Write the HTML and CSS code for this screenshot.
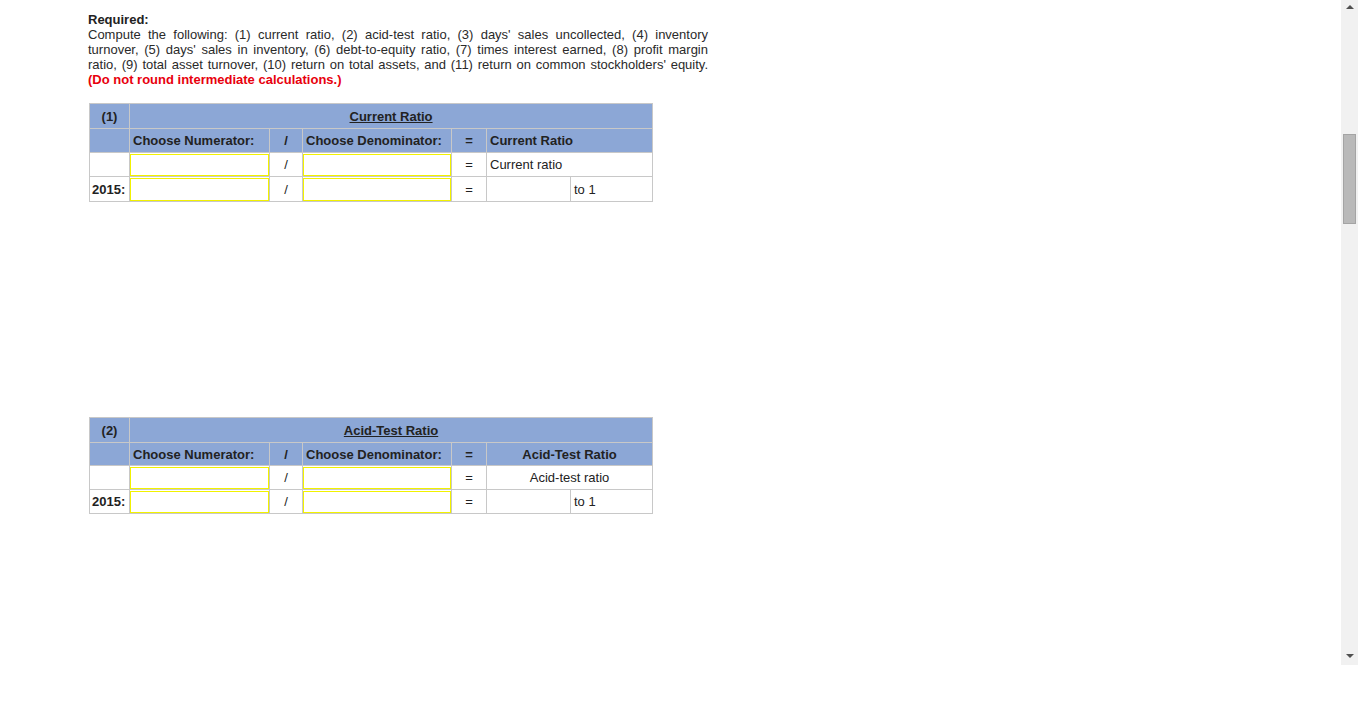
FILE: index.html
```html
<!DOCTYPE html>
<html>
<head>
<meta charset="utf-8">
<link rel="stylesheet" href="styles.css">
</head>
<body>
<div class="frame">
  <div class="content">
    <div class="req-title">Required:</div>
    <div class="req-text">Compute the following: (1) current ratio, (2) acid-test ratio, (3) days' sales uncollected, (4) inventory turnover, (5) days' sales in inventory, (6) debt-to-equity ratio, (7) times interest earned, (8) profit margin ratio, (9) total asset turnover, (10) return on total assets, and (11) return on common stockholders' equity.</div>
    <div class="req-note">(Do not round intermediate calculations.)</div>

    <table class="ratio t1">
      <colgroup>
        <col class="c-lab"><col class="c-num"><col class="c-sl"><col class="c-den"><col class="c-eq"><col class="c-res"><col class="c-to">
      </colgroup>
      <tr class="hd r1">
        <td class="ctr b">(1)</td>
        <td colspan="6" class="ctr b"><span class="ul">Current Ratio</span></td>
      </tr>
      <tr class="hd r2">
        <td></td>
        <td class="b pl">Choose Numerator:</td>
        <td class="ctr b">/</td>
        <td class="b pl">Choose Denominator:</td>
        <td class="ctr b">=</td>
        <td colspan="2" class="b pl">Current Ratio</td>
      </tr>
      <tr class="r3">
        <td></td>
        <td class="in"><div class="box"></div></td>
        <td class="ctr">/</td>
        <td class="in"><div class="box"></div></td>
        <td class="ctr">=</td>
        <td colspan="2" class="pl">Current ratio</td>
      </tr>
      <tr class="r4">
        <td class="b pl2">2015:</td>
        <td class="in"><div class="box"></div></td>
        <td class="ctr">/</td>
        <td class="in"><div class="box"></div></td>
        <td class="ctr">=</td>
        <td></td>
        <td class="pl">to 1</td>
      </tr>
    </table>

    <table class="ratio t2">
      <colgroup>
        <col class="c-lab"><col class="c-num"><col class="c-sl"><col class="c-den"><col class="c-eq"><col class="c-res"><col class="c-to">
      </colgroup>
      <tr class="hd r1">
        <td class="ctr b">(2)</td>
        <td colspan="6" class="ctr b"><span class="ul">Acid-Test Ratio</span></td>
      </tr>
      <tr class="hd r2">
        <td></td>
        <td class="b pl">Choose Numerator:</td>
        <td class="ctr b">/</td>
        <td class="b pl">Choose Denominator:</td>
        <td class="ctr b">=</td>
        <td colspan="2" class="ctr b">Acid-Test Ratio</td>
      </tr>
      <tr class="r3">
        <td></td>
        <td class="in"><div class="box"></div></td>
        <td class="ctr">/</td>
        <td class="in"><div class="box"></div></td>
        <td class="ctr">=</td>
        <td colspan="2" class="ctr">Acid-test ratio</td>
      </tr>
      <tr class="r4">
        <td class="b pl2">2015:</td>
        <td class="in"><div class="box"></div></td>
        <td class="ctr">/</td>
        <td class="in"><div class="box"></div></td>
        <td class="ctr">=</td>
        <td></td>
        <td class="pl">to 1</td>
      </tr>
    </table>
  </div>
  <div class="scrollbar">
    <div class="arrow up"></div>
    <div class="track"><div class="thumb"></div></div>
    <div class="arrow down"></div>
  </div>
</div>
</body>
</html>
```
FILE: styles.css
```css
html, body {
  margin: 0;
  padding: 0;
  background: #fff;
}
body {
  font-family: "Liberation Sans", Arial, sans-serif;
  font-size: 13px;
  color: #222;
}
.frame {
  display: flex;
  width: 1358px;
  height: 665px;
  overflow: hidden;
}
.content {
  width: 1341px;
  flex: none;
  padding: 12px 0 0 88px;
  box-sizing: border-box;
}
.req-title {
  font-weight: bold;
  line-height: 15px;
  width: 620px;
}
.req-text {
  width: 620px;
  line-height: 15px;
  text-align: justify;
  text-align-last: justify;
  color: #2a2a2a;
}
.req-note {
  color: #e8000d;
  font-weight: bold;
  line-height: 15px;
}
table.ratio {
  border-collapse: collapse;
  table-layout: fixed;
  width: 564px;
  margin-left: 1px;
}
table.t1 { margin-top: 16px; }
table.t2 { margin-top: 215px; }
.c-lab { width: 40px; }
.c-num { width: 140px; }
.c-sl { width: 33px; }
.c-den { width: 149px; }
.c-eq { width: 35px; }
.c-res { width: 84px; }
.c-to { width: 82px; }
table.ratio td {
  border: 1px solid #c8c8c8;
  padding: 0;
  height: 23px;
  white-space: nowrap;
  overflow: hidden;
}
table.ratio tr.hd td {
  background: #8ca7d6;
}
table.t1 tr.r1 td { height: 24px; }
table.t1 tr.r2 td { height: 23px; }
table.t1 tr.r3 td { height: 23px; }
table.t1 tr.r4 td { height: 24px; }
table.t2 tr.r1 td { height: 24px; }
table.t2 tr.r2 td { height: 22px; }
table.t2 tr.r3 td { height: 23px; }
table.t2 tr.r4 td { height: 23px; }
.ctr { text-align: center; }
.b { font-weight: bold; }
.pl { padding-left: 3px !important; }
.pl2 { padding-left: 2px !important; }
.ul { text-decoration: underline; }
td.in { padding: 0; }
.box {
  height: 20px;
  border: 1px solid #f2f200;
  background: #fff;
}
table.t1 tr.r4 .box { height: 21px; }
.scrollbar {
  width: 17px;
  flex: none;
  height: 665px;
  background: #f1f1f1;
  display: flex;
  flex-direction: column;
}
.arrow {
  height: 17px;
  flex: none;
  position: relative;
}
.arrow::after {
  content: "";
  position: absolute;
  left: 5px;
  width: 0;
  height: 0;
  border-left: 4px solid transparent;
  border-right: 4px solid transparent;
}
.arrow.up::after {
  top: 5px;
  border-bottom: 4px solid #505050;
}
.arrow.down::after {
  top: 6px;
  border-top: 4px solid #505050;
}
.track {
  flex: 1;
  padding-top: 117px;
  padding-left: 2px;
}
.thumb {
  width: 11px;
  height: 88px;
  background: #b9b9b9;
  border: 1px solid #a4a4a4;
}
```
